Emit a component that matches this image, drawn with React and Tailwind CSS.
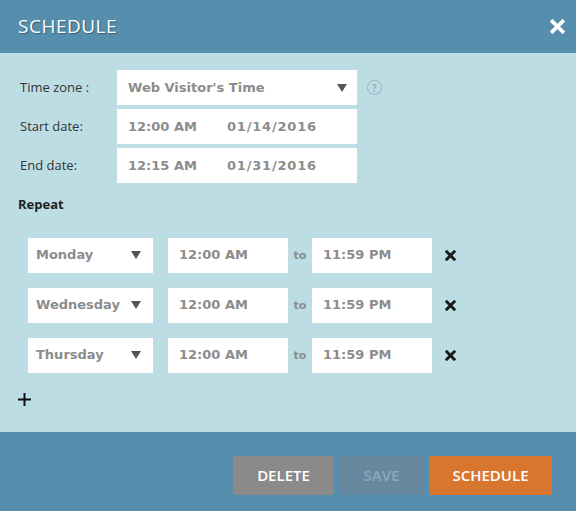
const rows = [
  { day: "Monday", from: "12:00 AM", to: "11:59 PM" },
  { day: "Wednesday", from: "12:00 AM", to: "11:59 PM" },
  { day: "Thursday", from: "12:00 AM", to: "11:59 PM" },
];

const Caret = () => (
  <svg width="10" height="8" viewBox="0 0 10 8" className="shrink-0">
    <path d="M0 0 H10 L5 8 Z" fill="#555" />
  </svg>
);

const Cross = ({ color, size, weight = 3 }) => (
  <svg width={size} height={size} viewBox="0 0 12 12">
    <path d="M2 2 L10 10 M10 2 L2 10" stroke={color} strokeWidth={weight} strokeLinecap="square" />
  </svg>
);

const boxText = "font-['DejaVu_Sans',Verdana,sans-serif] font-bold text-[13px] text-[#8c8c8c]";

const App = () => {
  return (
    <div className="w-[576px] h-[511px] flex flex-col font-['Open_Sans',sans-serif] bg-[#bddde5]">
      {/* Header */}
      <div className="h-[53px] bg-[#568eae] flex items-center justify-between pl-[18px] pr-[11px] shrink-0">
        <h1 className="text-white text-[19px] tracking-[0.5px] [text-shadow:1px_1px_1px_rgba(0,0,0,0.35)]">SCHEDULE</h1>
        <Cross color="#fff" size={15} />
      </div>

      {/* Body */}
      <div className="flex-1 flex flex-col pt-[17px] pl-[18px]">
        <div className="flex flex-col gap-[4px]">
          <div className="flex items-center">
            <span className="w-[99px] pl-[2px] text-[13px] text-[#333]">Time zone :</span>
            <div className={`w-[240px] h-[35px] bg-white flex items-center justify-between pl-[11px] pr-[10px] ${boxText}`}>
              <span>Web Visitor's Time</span>
              <Caret />
            </div>
            <div className="ml-[10px] w-[15px] h-[15px] rounded-full border-[1.5px] border-[#9ab0ba] flex items-center justify-center text-[10px] font-bold text-[#9ab0ba] leading-none">?</div>
          </div>
          <div className="flex items-center">
            <span className="w-[99px] pl-[2px] text-[13px] text-[#333]">Start date:</span>
            <div className={`w-[240px] h-[35px] bg-white flex items-center pl-[11px] ${boxText}`}>
              <span className="w-[99px]">12:00 AM</span>
              <span className="tracking-[0.8px]">01/14/2016</span>
            </div>
          </div>
          <div className="flex items-center">
            <span className="w-[99px] pl-[2px] text-[13px] text-[#333]">End date:</span>
            <div className={`w-[240px] h-[35px] bg-white flex items-center pl-[11px] ${boxText}`}>
              <span className="w-[99px]">12:15 AM</span>
              <span className="tracking-[0.8px]">01/31/2016</span>
            </div>
          </div>
        </div>

        <h2 className="mt-[12px] text-[13px] font-bold text-[#222]">Repeat</h2>

        <div className="mt-[23px] pl-[10px] flex flex-col gap-[15px]">
          {rows.map((r) => (
            <div key={r.day} className="flex items-center">
              <div className={`w-[125px] h-[35px] bg-white flex items-center justify-between pl-[8px] pr-[12px] ${boxText}`}>
                <span>{r.day}</span>
                <Caret />
              </div>
              <div className={`ml-[15px] w-[120px] h-[35px] bg-white flex items-center pl-[11px] ${boxText}`}>
                {r.from}
              </div>
              <span className="w-[24px] text-center font-['DejaVu_Sans',sans-serif] font-bold text-[11px] text-[#8c8c8c] pt-[2px]">to</span>
              <div className={`w-[120px] h-[35px] bg-white flex items-center pl-[11px] ${boxText}`}>
                {r.to}
              </div>
              <div className="ml-[13px]">
                <Cross color="#1a1a1a" size={11} weight={3.2} />
              </div>
            </div>
          ))}
        </div>

        <div className="mt-[20px]">
          <svg width="13" height="13" viewBox="0 0 13 13">
            <path d="M0 6.5 H13 M6.5 0 V13" stroke="#111" strokeWidth="2" />
          </svg>
        </div>
      </div>

      {/* Footer */}
      <div className="h-[79px] bg-[#568eae] flex items-start justify-end gap-[5px] pt-[24px] pr-[24px] shrink-0">
        <button className="w-[101px] h-[39px] bg-[#8a8a8a] text-white text-[15px] font-semibold">DELETE</button>
        <button className="w-[85px] h-[39px] bg-[#6789a0] text-[#86a9bd] text-[15px] font-semibold">SAVE</button>
        <button className="w-[123px] h-[39px] bg-[#d9762e] text-white text-[15px] font-semibold">SCHEDULE</button>
      </div>
    </div>
  );
};

export default App;
